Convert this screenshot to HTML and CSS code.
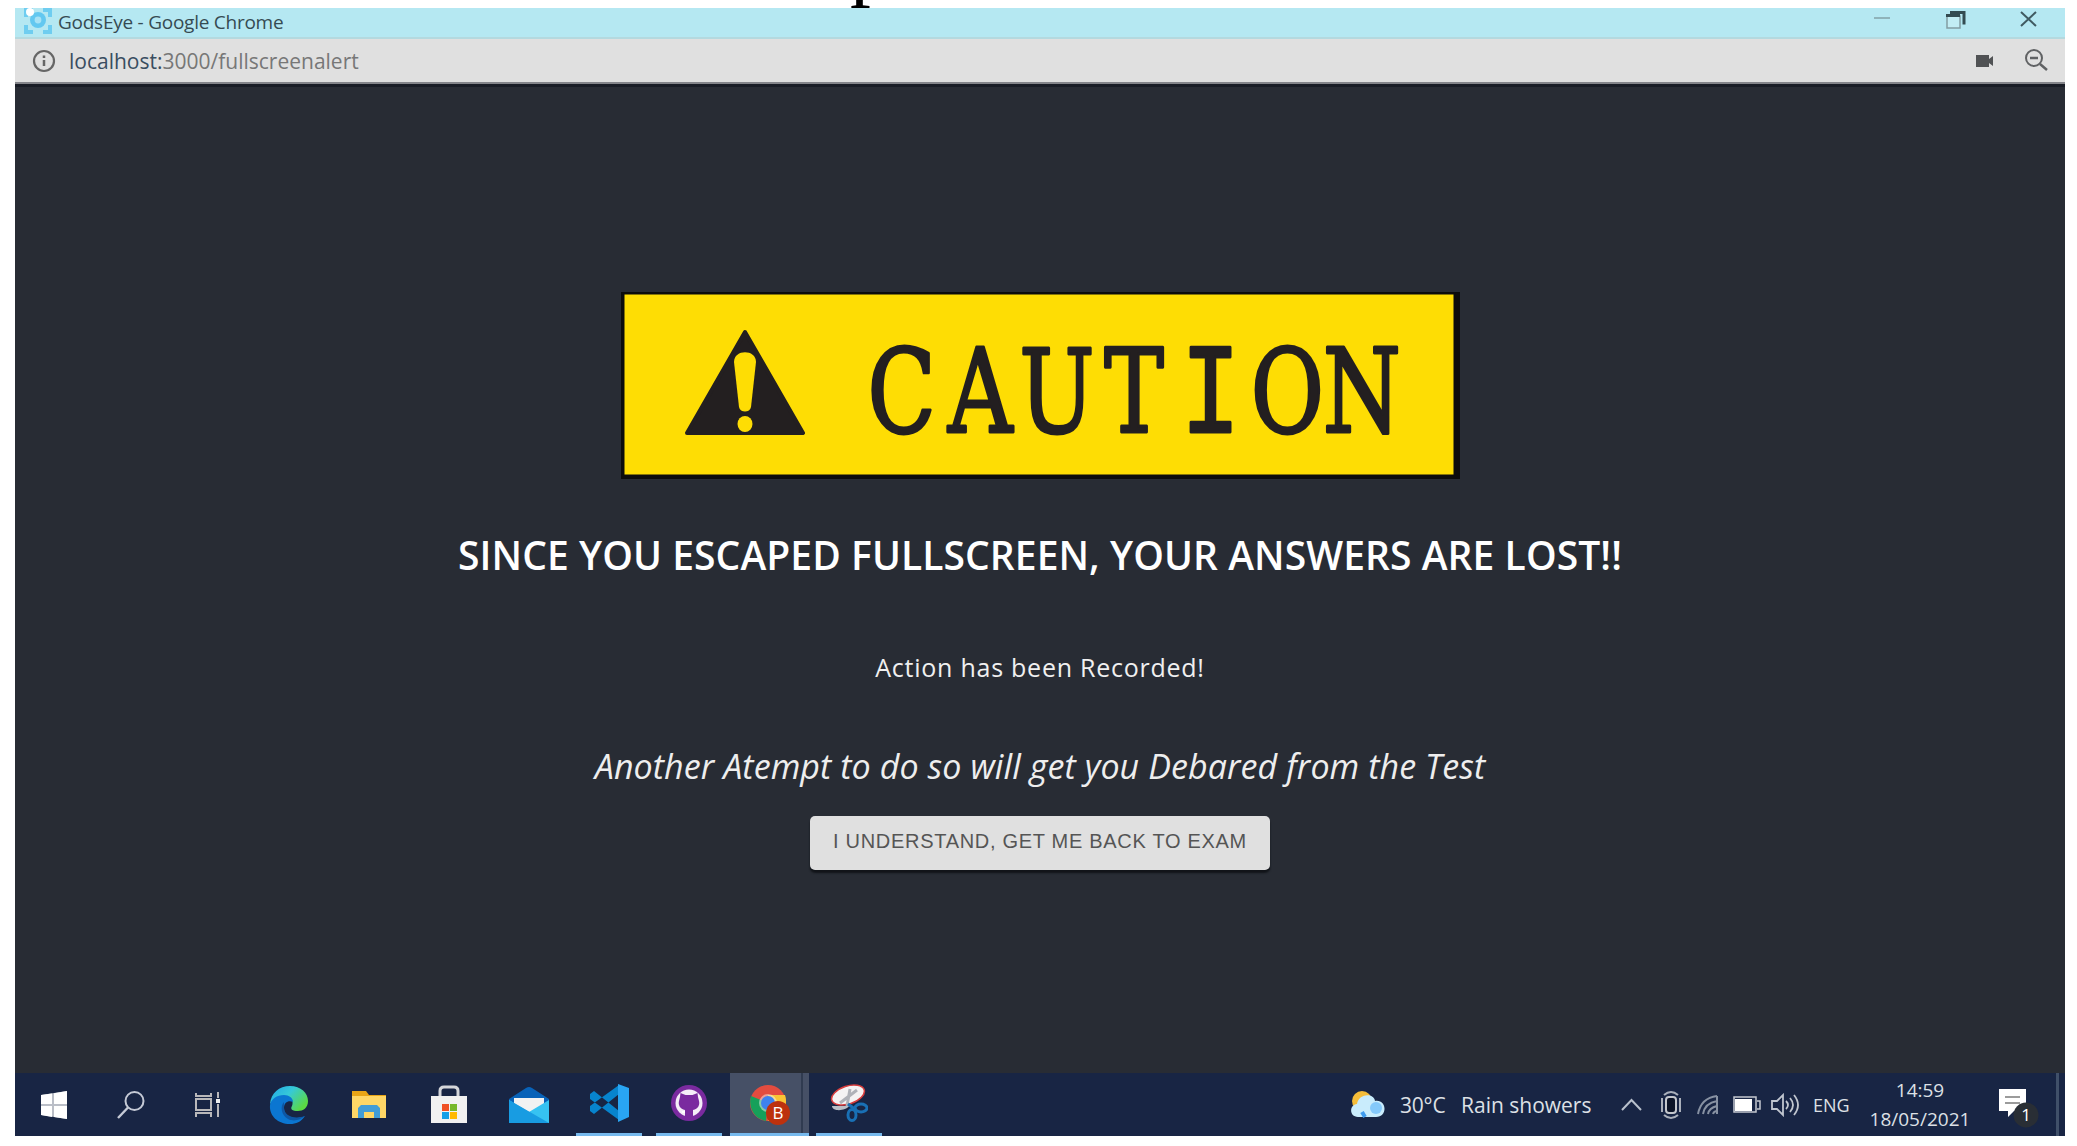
FILE: index.html
```html
<!DOCTYPE html>
<html lang="en">
<head>
<meta charset="utf-8">
<title>GodsEye - Google Chrome</title>
<link rel="stylesheet" href="styles.css">
</head>
<body>
<div class="page-line"><span>p</span></div>
<div class="window">
  <header class="titlebar">
    <svg class="favicon" width="28" height="26" viewBox="0 0 28 26"><path d="M2 9V2h7M19 2h7v7M26 17v7h-7M9 24H2v-7" fill="none" stroke="#6fcdf0" stroke-width="4"/><circle cx="14" cy="12" r="8" fill="#63c8f0"/><circle cx="14" cy="12" r="3.4" fill="#a7e2f5"/><circle cx="6" cy="4" r="4" fill="#fff"/></svg>
    <span class="title">GodsEye - Google Chrome</span>
    <svg class="controls" width="170" height="30" viewBox="0 0 170 30"><path d="M10 10h16" stroke="#8fb3ba" stroke-width="2"/><path d="M83 8h13v12H83z" fill="#c2edf4" stroke="#829da3" stroke-width="1.5"/><path d="M82 7.500h14M86 4.500h14v12" fill="none" stroke="#334b51" stroke-width="3"/><path d="M157 4l15 14M172 4l-15 14" stroke="#405a61" stroke-width="2"/></svg>
  </header>
  <div class="addressbar">
    <svg width="24" height="24" viewBox="0 0 24 24"><circle cx="12" cy="12" r="10" fill="none" stroke="#666" stroke-width="2.200"/><path d="M12 11v6M12 6.500v2.500" stroke="#666" stroke-width="2.500"/></svg>
    <span class="url"><b>localhost:</b>3000/fullscreenalert</span>
    <svg class="tools" width="76" height="26" viewBox="0 0 76 26"><path d="M2 7h13v4l4-3v10l-4-3v4H2z" fill="#505254"/><circle cx="60" cy="10" r="8" fill="none" stroke="#606264" stroke-width="2"/><path d="M56 10h8M66 16l7 6" stroke="#606264" stroke-width="2.500"/></svg>
  </div>
  <main class="alert">
    <svg class="banner" width="839" height="187" viewBox="0 0 839 187">
      <path d="M0 0h839v187H0z" fill="#0c0c0c"/><path d="M3.500 2.500h829v180h-829z" fill="#fedd04"/>
      <path d="M124 40l58 101H66z" fill="#231f20" stroke="#231f20" stroke-width="4" stroke-linejoin="round"/>
      <path d="M113 70c0-13 22-13 22 0l-5 45c-1 6-11 6-12 0z" fill="#fedd04"/><ellipse cx="124" cy="132" rx="7.500" ry="8" fill="#fedd04"/>
      <g transform="scale(.77 1)"><text class="caution" y="140" x="364.500 466.500 566.200 666.200 765.800 865.400 962">CAUT<tspan class="mono">I</tspan>ON</text></g>
    </svg>
    <h1>SINCE YOU ESCAPED FULLSCREEN, YOUR ANSWERS ARE LOST!!</h1>
    <p class="recorded">Action has been Recorded!</p>
    <p class="warning">Another Atempt to do so will get you Debared from the Test</p>
    <button>I UNDERSTAND, GET ME BACK TO EXAM</button>
  </main>
  <footer class="taskbar">
    <div class="system">
      <div><svg width="28" height="28" viewBox="0 0 28 28"><path d="M1 4l11-1.500V13H1zM14 2.200L27 0v13H14zM1 15h11v11L1 24zM14 15h13v13l-13-2z" fill="#fff"/><path d="M1 4l26-4v28L1 24z" fill="#fff" opacity=".7"/></svg></div>
      <div><svg width="28" height="28" viewBox="0 0 28 28"><circle cx="17.500" cy="10" r="9" fill="none" stroke="#c5cad6" stroke-width="2"/><path d="M11 16.500L1 27" stroke="#c5cad6" stroke-width="2.400"/></svg></div>
      <div><svg width="28" height="28" viewBox="0 0 28 28"><path d="M2 2v3h15V2M2 26v-4h15v4M2 8h15v11H2zM24 1v6M24 13v13" fill="none" stroke="#b9b8ba" stroke-width="2"/><path d="M22 10h4" stroke="#eee" stroke-width="4"/></svg></div>
    </div>
    <div class="apps">
      <div><svg width="40" height="40" viewBox="0 0 40 40"><defs><linearGradient id="edge" x1="0" y1="0" x2="1" y2=".6"><stop stop-color="#20a6e8"/><stop offset=".5" stop-color="#36c9d8"/><stop offset="1" stop-color="#5bd944"/></linearGradient></defs><path d="M1 19C2 8 10 1 21 1c11 0 18 7 18 15 0 7-5 10-10 10-6 0-8-2-6-5 2-5-1-9-6-9-6 0-12 3-16 7z" fill="url(#edge)"/><path d="M1 20c1-6 7-10 14-10 5 0 9 3 9 7-5-2-9 1-9 6 0 8 9 13 21 8-4 6-9 8-15 8C9 39 0 31 1 20z" fill="#0b76d1"/><path d="M15 17c-4 4-3 13 4 17 6 3 12 1 17-3-12 4-21-1-21-8z" fill="#0e57a4"/></svg></div>
      <div><svg width="36" height="28" viewBox="0 0 36 28"><path d="M1 0h14l3 4h17v23H1z" fill="#e9a516"/><path d="M1 5h34v22H1z" fill="#ffd766"/><path d="M7 27V17l3-3h16l3 3v10h-6v-6H13v6z" fill="#439dd6"/></svg></div>
      <div><svg width="38" height="40" viewBox="0 0 38 40"><path d="M10 14V6q0-4 4-4h10q4 0 4 4v8" fill="none" stroke="#d4d6da" stroke-width="3"/><path d="M1 11h36v27H1z" fill="#f1f1f1"/><path d="M12 19h7v7h-7z" fill="#f05125"/><path d="M20 19h7v7h-7z" fill="#76b82a"/><path d="M12 27h7v7h-7z" fill="#159fe8"/><path d="M20 27h7v7h-7z" fill="#ffb900"/></svg></div>
      <div><svg width="40" height="38" viewBox="0 0 40 38"><path d="M0 13L17 2q3-2 6 0l17 11v6H0z" fill="#0862b8"/><path d="M5 12h30v14H5z" fill="#f2f2f2"/><path d="M0 14l20 12 20-12v23H0z" fill="#36c3f2"/><path d="M0 14l40 23H0z" fill="#189ce2"/></svg></div>
      <div class="running"><svg width="40" height="38" viewBox="0 0 40 38"><path d="M1 10l4-3 25 20v9L1 15zM1 27l4 3 25-20V1L1 22z" fill="#0784ce"/><path d="M29 0l11 4v29l-11 5z" fill="#29a5f3"/></svg></div>
      <div class="running"><svg width="38" height="38" viewBox="0 0 38 38"><circle cx="19" cy="19" r="18" fill="#7a2a9f"/><circle cx="19" cy="19" r="13.500" fill="#f5edf8"/><path d="M15 33v-7c-5-1-7-5-6-9l1-4 .500-4 5 2h7l5-2 .500 4 1 4c1 4-1 8-6 9v7z" fill="#7a2a9f"/><path d="M15 28h-3" stroke="#fff" stroke-width="2"/></svg></div>
      <div class="active"><svg width="44" height="44" viewBox="0 0 44 44"><circle cx="20" cy="20" r="18" fill="#e34c3f"/><path d="M20 20L3 13C0 23 5 36 18 38z" fill="#16a05a"/><path d="M20 12h17c4 12-4 24-17 26z" fill="#f9c434"/><circle cx="20" cy="20" r="9" fill="#f4f4f4" opacity=".5"/><circle cx="20" cy="20" r="7" fill="#3e82ef"/><circle cx="30" cy="30" r="12" fill="#bd310d"/><text x="30" y="36" class="badge">B</text></svg></div>
      <div class="running"><svg width="38" height="38" viewBox="0 0 38 38"><path d="M2 22c0 6 14 5 17 0z" fill="#b9bec6"/><ellipse cx="18" cy="11" rx="17" ry="9" transform="rotate(-18 18 11)" fill="#f5f3f3" stroke="#d83d3d" stroke-width="1.500"/><path d="M20 5l-3 17M10 19l17-13" stroke="#b0b2b8" stroke-width="3"/><g fill="none" stroke="#1970b5" stroke-width="3"><ellipse cx="31" cy="24" rx="6" ry="4"/><ellipse cx="22" cy="31" rx="4" ry="5.500"/><path d="M18 20l8 6"/></g></svg></div>
    </div>
    <div class="tray">
      <svg width="34" height="29" viewBox="0 0 34 29"><circle cx="11" cy="11" r="10" fill="#f5bd39"/><path d="M7 27c-9 0-9-12-1-13C8 3 23 3 24 11c12-2 13 16 1 16z" fill="#c9ecfc"/><circle cx="25" cy="18" r="6" fill="#84c9fb"/><path d="M11 22l3 5" stroke="#3f9bee" stroke-width="4"/></svg>
      <span class="temp">30°C</span><span class="weather">Rain showers</span>
      <svg class="chevron" width="21" height="14" viewBox="0 0 21 14"><path d="M1 12l9.500-10L20 12" fill="none" stroke="#b8c0cc" stroke-width="2"/></svg>
      <svg class="meet" width="24" height="30" viewBox="0 0 24 30"><path d="M5 5q7-6 14 0M5 25q7 6 14 0" fill="none" stroke="#aab0bb" stroke-width="2"/><rect x="7" y="7" width="10" height="16" rx="3" fill="#0c1427" stroke="#c4c7cd" stroke-width="2"/><path d="M3 8v14M21 8v14" stroke="#aab0bb" stroke-width="2"/></svg>
      <svg class="wifi" width="22" height="22" viewBox="0 0 22 22"><g fill="none" stroke="#8791a2" stroke-width="2"><path d="M1 20Q4 4 20 2M6 20Q8 9 20 7M11 20q1-6 9-8M16 20q1-3 4-3M20 2v18"/></g></svg>
      <svg class="battery" width="28" height="18" viewBox="0 0 28 18"><path d="M1 1h22v15H1zM24 5h3v8h-3" fill="none" stroke="#c4c8cf" stroke-width="1.500"/><path d="M2 3h17v12H2z" fill="#fff"/></svg>
      <svg class="volume" width="28" height="24" viewBox="0 0 28 24"><path d="M1 8h5l6-6v20l-6-6H1zM15 8q4 4 0 8M19 5q6 7 0 14M23 2q8 10 0 20" fill="none" stroke="#c0c6cf" stroke-width="1.800"/></svg>
      <span class="language">ENG</span>
      <div class="clock"><span class="time">14:59</span><span class="date">18/05/2021</span></div>
      <svg class="notify" width="42" height="40" viewBox="0 0 42 40"><path d="M1 1h27v22H16l-6 6v-6H1z" fill="#fff"/><path d="M7 9h15M7 15h15" stroke="#9b9b9b" stroke-width="2"/><circle cx="28" cy="27" r="12.500" fill="#292e35"/><text x="28" y="33" class="badge">1</text></svg>
      <i class="peek"></i>
    </div>
  </footer>
</div>
</body>
</html>
```
FILE: styles.css
```css
* { box-sizing: border-box; }
body { margin: 0; width: 2077px; height: 1146px; background: #fff; overflow: hidden; font-family: "Open Sans", "Noto Sans", sans-serif; }
.page-line { height: 8px; padding-left: 850px; display: flex; align-items: flex-start; overflow: hidden; font: 83px/0 "Liberation Serif", serif; color: #000; }
.page-line span { margin-top: -38px; }
.window { width: 2050px; height: 1128px; margin-left: 15px; display: flex; flex-direction: column; background: #282c34; }
.titlebar { height: 31px; display: flex; align-items: flex-start; padding-left: 9px; background: #b5e8f2; border-bottom: 2px solid #b4d9df; }
.title { margin-left: 6px; font-size: 19px; line-height: 28px; color: #364b52; letter-spacing: -.25px; white-space: nowrap; }
.controls { margin-left: auto; margin-right: 31px; overflow: visible; }
.addressbar { height: 45px; display: flex; align-items: center; padding-left: 17px; background: #e0e0e0; border-bottom: 2px solid #84858a; }
.url { margin-left: 13px; font-size: 21px; color: #777; white-space: nowrap; }
.url b { font-weight: 400; color: #394d60; }
.tools { margin-left: auto; margin-right: 15px; }
.alert { height: 989px; display: flex; flex-direction: column; align-items: center; padding-top: 205px; border-top: 3px solid #191d26; color: #fff; }
.banner { display: block; flex: none; }
.caution { font-family: "DejaVu Serif", serif; font-size: 116px; text-anchor: middle; fill: #231f20; stroke: #231f20; stroke-width: 3px; stroke-linejoin: round; }
.mono { font-family: "Liberation Mono", monospace; font-size: 128px; }
h1 { margin: 48px 0 0; font-size: 39px; line-height: 56px; font-weight: 600; letter-spacing: .08px; white-space: nowrap; }
.recorded { margin: 64px 0 0; font-size: 25px; line-height: 40px; letter-spacing: .75px; color: #f0f0f0; white-space: nowrap; }
.warning { margin: 54px 0 0; font-size: 34px; line-height: 50px; letter-spacing: .08px; font-style: italic; color: #eee; white-space: nowrap; }
button { flex: none; width: 460px; height: 54px; margin-top: 25px; padding: 0 0 3px; border: 0; border-radius: 5px; background: #e0e0e0; box-shadow: 0 3px 2px #111419; color: #555; font: 20px "Liberation Sans", sans-serif; letter-spacing: .7px; white-space: nowrap; }
.taskbar { height: 63px; display: flex; background: #182544; }
.system, .apps { display: flex; }
.system > div { width: 77px; display: flex; align-items: center; justify-content: center; }
.apps { margin-left: 3px; }
.apps > div { width: 80px; display: flex; align-items: center; justify-content: center; }
.apps .running { width: 66px; margin: 0 7px; border-bottom: 3px solid #76b9ed; }
.apps .active { width: 79px; margin-left: 1px; padding-top: 3px; border-bottom: 3px solid #76b9ed; background: linear-gradient(90deg, #465066 0 90%, #303b50 90% 92%, #465066 92%); }
.badge { font: 17px "Open Sans", sans-serif; text-anchor: middle; fill: #fff; }
.tray { flex: 1; display: flex; align-items: center; justify-content: flex-end; color: #dde0e6; white-space: nowrap; }
.tray > * { flex: none; }
.temp { width: 61px; margin-left: 15px; font-size: 21px; letter-spacing: -.2px; }
.weather { width: 160px; font-size: 21px; }
.meet { margin-left: 17px; }
.wifi { margin-left: 14px; }
.battery { margin-left: 14px; }
.volume { margin-left: 10px; }
.language { width: 40px; margin-left: 14px; font-size: 18px; }
.clock { width: 110px; margin-left: 12px; display: flex; flex-direction: column; align-items: center; font-size: 19px; line-height: 29px; }
.notify { margin: 6px 0 0 23px; }
.peek { width: 3px; height: 63px; margin: 0 6px 0 16px; background: #405069; }
```
